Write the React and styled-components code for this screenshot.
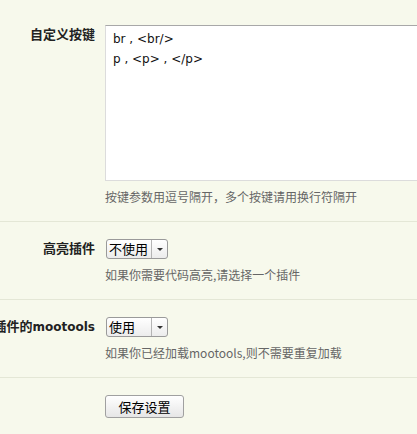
import React from "react";
import styled, { createGlobalStyle } from "styled-components";

const GlobalStyle = createGlobalStyle`
  html, body {
    margin: 0;
    padding: 0;
    background: #f7f9ec;
    overflow: hidden;
  }
  body {
    font-family: "DejaVu Sans", "Noto Sans CJK SC", sans-serif;
    color: #333;
  }
`;

const Form = styled.div`
  display: flex;
  flex-direction: column;
  width: 417px;
`;

const Row = styled.div`
  display: grid;
  grid-template-columns: 95px 1fr;
  column-gap: 10px;
  padding: ${({ $first }) => ($first ? "25px" : "17px")} 0 15px;
  border-top: ${({ $first }) => ($first ? "none" : "1px solid #e4e7d6")};
`;

const Label = styled.div`
  display: flex;
  justify-content: flex-end;
  align-items: baseline;
  white-space: nowrap;
  font-size: 13px;
  font-weight: bold;
  line-height: 20px;
  color: #222;
`;

const Latin = styled.span`
  font-size: 12px;
`;

const Field = styled.div`
  display: flex;
  flex-direction: column;
  align-items: flex-start;
  min-width: 0;
`;

const TextArea = styled.textarea`
  box-sizing: border-box;
  width: 340px;
  height: 156px;
  margin: 0;
  padding: 3px 7px;
  border: 1px solid #dcdcdc;
  border-top-color: #a8a8a8;
  background: #fff;
  font-family: "DejaVu Sans", "Noto Sans CJK SC", sans-serif;
  font-size: 12px;
  line-height: 20px;
  color: #111;
  resize: none;
  outline: none;
`;

const Help = styled.div`
  margin-top: 7px;
  font-family: "Noto Sans CJK SC", sans-serif;
  font-size: 12px;
  line-height: 18px;
  color: #666;
  white-space: nowrap;
`;

const Select = styled.div`
  box-sizing: border-box;
  display: flex;
  width: 62px;
  height: 20px;
  margin-left: 1px;
  border: 1px solid #9a9a9a;
  border-radius: 3px;
  background: linear-gradient(#ffffff, #ececec);
  font-family: "Noto Sans CJK SC", sans-serif;
  font-size: 13px;
  line-height: 18px;
  color: #000;
  cursor: default;
`;

const SelectValue = styled.span`
  flex: 1;
  padding-left: 2px;
  white-space: nowrap;
`;

const SelectArrow = styled.span`
  display: flex;
  align-items: center;
  justify-content: center;
  width: 15px;
  border-left: 1px solid #b4b4b4;
  &::after {
    content: "";
    border-left: 3px solid transparent;
    border-right: 3px solid transparent;
    border-top: 3px solid #333;
  }
`;

const Button = styled.button`
  box-sizing: border-box;
  width: 79px;
  height: 23px;
  margin: 0;
  padding: 0;
  border: 1px solid #a0a0a0;
  border-radius: 3px;
  background: linear-gradient(#ffffff, #e6e6e6);
  font-family: "Noto Sans CJK SC", sans-serif;
  font-size: 13px;
  color: #000;
`;

const Dropdown = ({ value }) => (
  <Select>
    <SelectValue>{value}</SelectValue>
    <SelectArrow />
  </Select>
);

export default function App() {
  return (
    <>
      <GlobalStyle />
      <Form>
        <Row $first>
          <Label>自定义按键</Label>
          <Field>
            <TextArea defaultValue={"br , <br/>\np , <p> , </p>"} />
            <Help>按键参数用逗号隔开，多个按键请用换行符隔开</Help>
          </Field>
        </Row>
        <Row>
          <Label>高亮插件</Label>
          <Field>
            <Dropdown value="不使用" />
            <Help>如果你需要代码高亮,请选择一个插件</Help>
          </Field>
        </Row>
        <Row>
          <Label>
            加载插件的<Latin>mootools</Latin>
          </Label>
          <Field>
            <Dropdown value="使用" />
            <Help>如果你已经加载mootools,则不需要重复加载</Help>
          </Field>
        </Row>
        <Row>
          <span />
          <Field>
            <Button>保存设置</Button>
          </Field>
        </Row>
      </Form>
    </>
  );
}
